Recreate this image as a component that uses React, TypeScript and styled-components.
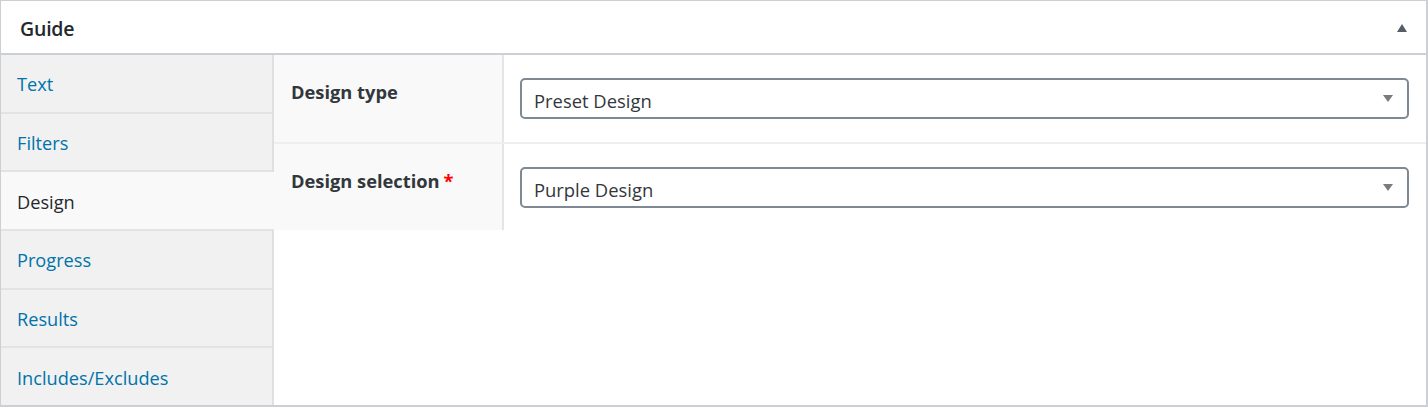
import React, { useState } from "react";
import styled, { createGlobalStyle } from "styled-components";

const GlobalStyle = createGlobalStyle`
  html, body {
    margin: 0;
    padding: 0;
    background: #fff;
    font-family: "Open Sans", "Noto Sans", sans-serif;
  }
`;

const Box = styled.div`
  width: 1428px;
  height: 407px;
  box-sizing: border-box;
  border: 1px solid #ccd0d4;
  border-right-width: 2px;
  border-bottom-width: 2px;
  display: flex;
  flex-direction: column;
  background: #fff;
`;

const Header = styled.div`
  height: 54px;
  box-sizing: border-box;
  border-bottom: 2px solid #ccd0d4;
  display: flex;
  align-items: center;
  justify-content: space-between;
  padding: 0 19px 0 19px;
`;

const Title = styled.h2`
  margin: 0;
  font-size: 19.5px;
  font-weight: 600;
  color: #23282d;
  letter-spacing: -0.2px;
  padding-top: 2px;
`;

const Toggle = styled.span`
  width: 0;
  height: 0;
  border-left: 5.5px solid transparent;
  border-right: 5.5px solid transparent;
  border-bottom: 8px solid #555d66;
  margin-top: 2px;
`;

const Body = styled.div`
  flex: 1;
  display: flex;
  min-height: 0;
`;

const Tabs = styled.ul`
  margin: 0;
  padding: 0;
  list-style: none;
  width: 271px;
  flex-shrink: 0;
  display: flex;
  flex-direction: column;
  border-right: 2px solid #e0e0e0;
  background: #f1f1f1;
`;

const Tab = styled.li<{ $active?: boolean }>`
  flex: 1;
  display: flex;
  align-items: center;
  padding-left: 16px;
  font-size: 18.2px;
  color: ${({ $active }) => ($active ? "#23282d" : "#0073aa")};
  background: ${({ $active }) => ($active ? "#f9f9f9" : "#f1f1f1")};
  border-bottom: 2px solid #e3e3e3;
  margin-right: ${({ $active }) => ($active ? "-2px" : "0")};
  padding-top: 2px;
  cursor: pointer;
  &:last-child {
    border-bottom: none;
  }
`;

const Panel = styled.div`
  flex: 1;
  align-self: flex-start;
  display: flex;
  flex-direction: column;
`;

const Row = styled.div<{ $divider?: boolean }>`
  display: flex;
  border-bottom: ${({ $divider }) => ($divider ? "2px solid #eeeeee" : "none")};
`;

const Label = styled.div`
  width: 230px;
  flex-shrink: 0;
  box-sizing: border-box;
  background: #f9f9f9;
  border-right: 2px solid #e5e5e5;
  padding: 24px 12px 0 17px;
  font-size: 18.3px;
  font-weight: 700;
  color: #32373c;
`;

const Required = styled.span`
  color: #ff0000;
  margin-left: 4px;
`;

const Field = styled.div<{ $h: number }>`
  flex: 1;
  height: ${({ $h }) => $h}px;
  box-sizing: border-box;
  padding: 23px 17px 0 16px;
`;

const Select = styled.div`
  height: 41px;
  box-sizing: border-box;
  border: 2px solid #7e8993;
  border-radius: 5px;
  display: flex;
  align-items: center;
  justify-content: space-between;
  padding: 3px 14px 0 12px;
  font-size: 18.4px;
  color: #32373c;
  background: #fff;
`;

const Caret = styled.span`
  width: 0;
  height: 0;
  border-left: 5.5px solid transparent;
  border-right: 5.5px solid transparent;
  border-top: 7px solid #7b7b7b;
  margin-top: -3px;
`;

const tabs = ["Text", "Filters", "Design", "Progress", "Results", "Includes/Excludes"];

export default function App() {
  const [active, setActive] = useState("Design");
  return (
    <>
      <GlobalStyle />
      <Box>
        <Header>
          <Title>Guide</Title>
          <Toggle />
        </Header>
        <Body>
          <Tabs>
            {tabs.map((t) => (
              <Tab key={t} $active={t === active} onClick={() => setActive(t)}>
                {t}
              </Tab>
            ))}
          </Tabs>
          <Panel>
            <Row $divider>
              <Label>Design type</Label>
              <Field $h={87}>
                <Select>
                  Preset Design
                  <Caret />
                </Select>
              </Field>
            </Row>
            <Row>
              <Label>
                Design selection<Required>*</Required>
              </Label>
              <Field $h={86}>
                <Select>
                  Purple Design
                  <Caret />
                </Select>
              </Field>
            </Row>
          </Panel>
        </Body>
      </Box>
    </>
  );
}
